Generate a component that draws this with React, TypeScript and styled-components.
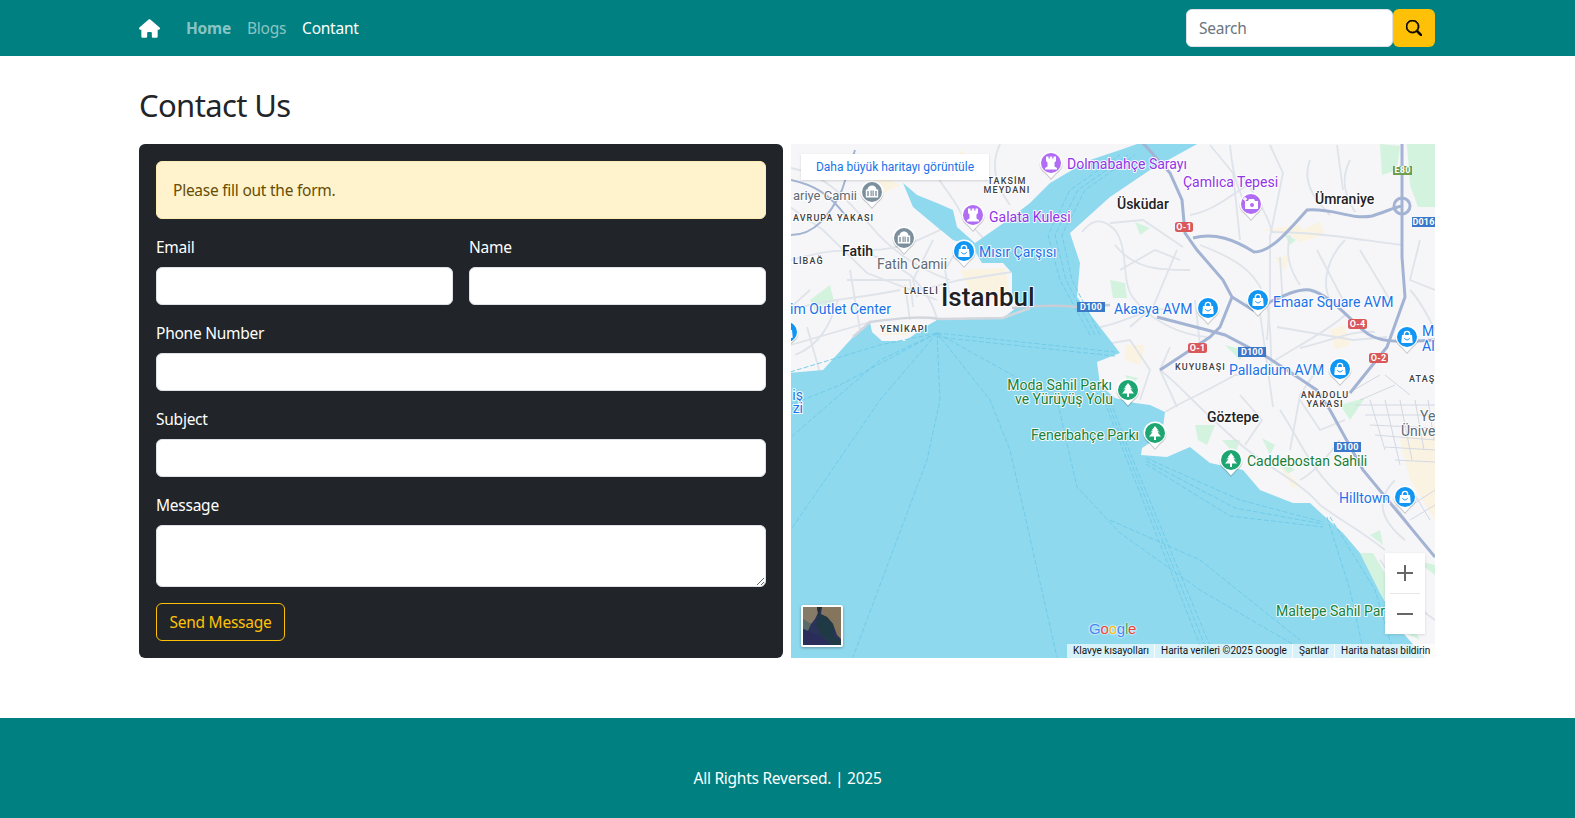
import React from "react";
import styled, { createGlobalStyle } from "styled-components";
import { FaHouse } from "react-icons/fa6";
import { BsSearch } from "react-icons/bs";

const UI_FONT = `"Noto Sans", "Open Sans", sans-serif`;
const TEAL = "#008080";

const Global = createGlobalStyle`
  * { box-sizing: border-box; }
  html, body { margin: 0; padding: 0; background: #fff; }
  body { font-family: ${UI_FONT}; font-size: 15.5px; line-height: 24px; color: #212529; letter-spacing: -0.016em; }
`;

const Page = styled.div`
  width: 1575px;
  height: 818px;
  display: flex;
  flex-direction: column;
  overflow: hidden;
`;
const NavBar = styled.header`
  height: 56px;
  flex: none;
  padding-left: 139px;
  background: ${TEAL};
  display: flex;
`;
const Container = styled.div`
  width: 1296px;
  display: flex;
  align-items: center;
`;
const Brand = styled.a`
  width: 47px;
  height: 56px;
  display: flex;
  align-items: center;
  color: #fff;
  font-size: 21px;
`;
const NavLinks = styled.nav`
  display: flex;
  gap: 16px;
  flex: 1;
`;
const NavLink = styled.a<{ $active?: boolean; $bold?: boolean }>`
  color: ${(p) => (p.$active ? "#fff" : "rgba(255,255,255,.55)")};
  font-weight: ${(p) => (p.$bold ? 700 : 400)};
`;
const SearchForm = styled.form`
  display: flex;
  height: 38px;
`;
const SearchInput = styled.input`
  width: 207px;
  height: 38px;
  padding: 6px 12px;
  border: 1px solid #dee2e6;
  border-radius: 6px;
  background: #fff;
  font: inherit;
  letter-spacing: inherit;
  &::placeholder { color: #6c757d; opacity: 1; }
`;
const SearchButton = styled.button`
  width: 42px;
  height: 38px;
  padding: 0;
  border: 0;
  border-radius: 6px;
  background: #ffc107;
  color: #000;
  display: flex;
  align-items: center;
  justify-content: center;
  font-size: 16px;
  svg { stroke: #000; stroke-width: 0.8px; }
`;
const Main = styled.main`
  width: 1296px;
  margin-left: 139px;
  flex: 1;
`;
const Title = styled.h2`
  margin: 30px 0 19px;
  font-size: 31px;
  line-height: 39px;
  font-weight: 400;
  letter-spacing: -0.02em;
`;
const Columns = styled.div`
  display: grid;
  grid-template-columns: 644px 644px;
  gap: 8px;
`;
const FormCard = styled.form`
  height: 514px;
  padding: 17px;
  border-radius: 6px;
  background: #212529;
  color: #fff;
`;
const Alert = styled.div`
  height: 58px;
  padding: 16px;
  margin-bottom: 16px;
  border: 1px solid #ffecb5;
  border-radius: 6px;
  background: #fff3cd;
  color: #664d03;
`;
const FieldRow = styled.div`
  display: grid;
  grid-template-columns: 1fr 1fr;
  gap: 16px;
`;
const Field = styled.div`
  margin-bottom: 16px;
`;
const Label = styled.label`
  display: block;
  height: 24px;
  margin-bottom: 8px;
`;
const TextInput = styled.input`
  display: block;
  width: 100%;
  height: 38px;
  border: 1px solid #dee2e6;
  border-radius: 6px;
  background: #fff;
`;
const TextArea = styled.textarea`
  display: block;
  width: 100%;
  height: 62px;
  border: 1px solid #dee2e6;
  border-radius: 6px;
  background: #fff;
  resize: vertical;
`;
const SendButton = styled.button`
  height: 38px;
  width: 129px;
  padding: 0;
  border: 1px solid #ffc107;
  border-radius: 6px;
  background: transparent;
  color: #ffc107;
  font: inherit;
  letter-spacing: inherit;
`;
const MapFrame = styled.div`
  position: relative;
  height: 514px;
  overflow: hidden;
  background: #f5f6f7;
`;
const MapSvg = styled.svg`
  display: block;
  width: 644px;
  height: 514px;
`;
const LargerMap = styled.a`
  position: absolute;
  left: 10px;
  top: 10px;
  width: 188px;
  height: 26px;
  background: #fff;
  color: #1a73e8;
  font: 400 12px/26px Roboto, sans-serif;
  letter-spacing: 0;
  text-align: center;
  box-shadow: 0 1px 2px rgba(60,64,67,.2);
`;
const ZoomBox = styled.div`
  position: absolute;
  left: 594px;
  top: 409px;
  width: 40px;
  height: 81px;
  background: #fff;
  box-shadow: 0 1px 3px rgba(0,0,0,.12);
  display: flex;
  flex-direction: column;
`;
const ZoomButton = styled.div`
  height: 40px;
  display: flex;
  align-items: center;
  justify-content: center;
`;
const ZoomDivider = styled.div`
  height: 1px;
  margin: 0 5px;
  background: #e6e6e6;
`;
const Thumb = styled.div`
  position: absolute;
  left: 10px;
  top: 461px;
  width: 42px;
  height: 42px;
  border: 2px solid #fff;
  border-radius: 2px;
  box-shadow: 0 1px 3px rgba(0,0,0,.3);
  overflow: hidden;
  svg { display: block; }
`;
const GoogleMark = styled.div`
  position: absolute;
  left: 298px;
  top: 475px;
  font: 500 15px/20px "Liberation Sans", sans-serif;
  letter-spacing: -0.2px;
  text-shadow: 0 0 2px #fff, 0 0 2px #fff;
`;
const Letter = styled.span<{ $c: string }>`
  color: ${(p) => p.$c};
`;
const Attribution = styled.div`
  position: absolute;
  right: 0;
  bottom: 0;
  height: 14px;
  display: flex;
  background: rgba(255,255,255,.65);
  font: 400 10px/14px Roboto, sans-serif;
  letter-spacing: 0;
  color: #111;
`;
const AttrItem = styled.span<{ $w: number }>`
  width: ${(p) => p.$w}px;
  padding-left: 6px;
  white-space: nowrap;
  & + & { border-left: 1px solid rgba(255,255,255,.8); }
`;
const Footer = styled.footer`
  height: 100px;
  flex: none;
  padding-top: 20px;
  background: ${TEAL};
  color: #fff;
  display: flex;
  align-items: center;
  justify-content: center;
`;

const MapText = styled.text<{ $c: string; $s: number; $w?: number; $ls?: number }>`
  font-family: Roboto, sans-serif;
  font-size: ${(p) => p.$s}px;
  font-weight: ${(p) => p.$w ?? 400};
  letter-spacing: ${(p) => p.$ls ?? 0}px;
  fill: ${(p) => p.$c};
  stroke: rgba(255,255,255,.9);
  stroke-width: 2px;
  stroke-linejoin: round;
  paint-order: stroke;
`;
const BadgeText = styled.text`
  font-family: Roboto, sans-serif;
  font-size: 9px;
  font-weight: 700;
  letter-spacing: 0.2px;
  fill: #fff;
  text-anchor: middle;
`;

const PURPLE = "#9334e6";
const BLUE = "#1a73e8";
const GREEN = "#188038";
const DARK = "#202124";
const GRAY = "#5f6b76";
const AREA = "#3c4043";

type L = [string, number, number, string, number, number?, ("end" | "middle")?, number?];
const labels: L[] = [
  ["Dolmabahçe Sarayı", 1067, 169, PURPLE, 14],
  ["Galata Kulesi", 989, 222, PURPLE, 14],
  ["Çamlıca Tepesi", 1183, 187, PURPLE, 14],
  ["Mısır Çarşısı", 979, 257, BLUE, 14],
  ["im Outlet Center", 891, 314, BLUE, 14, 400, "end"],
  ["Akasya AVM", 1114, 314, BLUE, 14],
  ["Emaar Square AVM", 1273, 307, BLUE, 14],
  ["Palladium AVM", 1229, 375, BLUE, 14],
  ["Hilltown", 1339, 503, BLUE, 14],
  ["M", 1422, 336, BLUE, 14],
  ["Al", 1422, 351, BLUE, 14],
  ["iş", 803, 400, BLUE, 14, 400, "end"],
  ["zi", 803, 413, BLUE, 14, 400, "end"],
  ["ariye Camii", 857, 200, GRAY, 13, 400, "end"],
  ["Fatih Camii", 877, 269, GRAY, 14],
  ["Ye", 1420, 421, GRAY, 14],
  ["Ünive", 1401, 436, GRAY, 14],
  ["Moda Sahil Parkı", 1112, 390, GREEN, 14, 400, "end"],
  ["ve Yürüyüş Yolu", 1113, 404, GREEN, 14, 400, "end"],
  ["Fenerbahçe Parkı", 1139, 440, GREEN, 14, 400, "end"],
  ["Caddebostan Sahili", 1247, 466, GREEN, 14],
  ["Maltepe Sahil Par", 1276, 616, GREEN, 14],
  ["Üsküdar", 1117, 209, DARK, 14, 500],
  ["Ümraniye", 1315, 204, DARK, 14, 500],
  ["Fatih", 842, 256, DARK, 14, 500],
  ["Göztepe", 1207, 422, DARK, 14, 500],
  ["İstanbul", 941, 306, DARK, 26, 500],
  ["AVRUPA YAKASI", 793, 221, AREA, 9, 500, undefined, 1.1],
  ["LİBAĞ", 793, 264, AREA, 9, 500, undefined, 1.1],
  ["LALELİ", 904, 294, AREA, 9, 500, undefined, 1.1],
  ["YENİKAPI", 880, 332, AREA, 9, 500, undefined, 1.1],
  ["TAKSİM", 1007, 184, AREA, 9, 500, "middle", 1.1],
  ["MEYDANI", 1007, 193, AREA, 9, 500, "middle", 1.1],
  ["KUYUBAŞI", 1175, 370, AREA, 9, 500, undefined, 1.1],
  ["ANADOLU", 1325, 398, AREA, 9, 500, "middle", 1.1],
  ["YAKASI", 1325, 407, AREA, 9, 500, "middle", 1.1],
  ["ATAŞ", 1409, 382, AREA, 9, 500, undefined, 1.1],
];

const badges: [string, number, number, number, number, string][] = [
  ["O-1", 1175, 222, 18, 10, "#d9585a"],
  ["O-1", 1188, 343, 19, 10, "#d9585a"],
  ["O-4", 1348, 319, 19, 10, "#d9585a"],
  ["O-2", 1369, 353, 19, 10, "#d9585a"],
  ["E80", 1393, 166, 19, 9, "#6f9f4c"],
  ["D016", 1412, 217, 23, 10, "#3a78c9"],
  ["D100", 1077, 302, 28, 10, "#3a78c9"],
  ["D100", 1238, 347, 28, 10, "#3a78c9"],
  ["D100", 1334, 442, 27, 10, "#3a78c9"],
];

type Kind = "castle" | "museum" | "bag" | "tree" | "camera";
const pinColor: Record<Kind, string> = {
  castle: "#b16cf5",
  museum: "#7b8f9c",
  bag: "#1296f3",
  tree: "#1ea672",
  camera: "#b16cf5",
};
const pins: [Kind, number, number][] = [
  ["castle", 1051, 163],
  ["castle", 973, 215],
  ["museum", 872, 192],
  ["museum", 904, 238],
  ["bag", 964, 251],
  ["bag", 787, 332],
  ["camera", 1251, 204],
  ["bag", 1208, 308],
  ["bag", 1258, 300],
  ["bag", 1407, 337],
  ["bag", 1340, 369],
  ["tree", 1128, 390],
  ["tree", 1155, 433],
  ["tree", 1231, 460],
  ["bag", 1405, 497],
];

const Glyph = ({ kind }: { kind: Kind }) => {
  switch (kind) {
    case "castle":
      return <path fill="#fff" d="M-5-6.500h2.500v2h1.300v-2H1.200v2h1.300v-2H5V-2L3.500-.5V3.500L6 5V6.500H-6V5L-3.500 3.500V-.5L-5-2Z" />;
    case "museum":
      return <path fill="#fff" fillRule="evenodd" d="M0-6.500C3-6.500 4.500-4 4.500-2.500H6.200V5.500H-6.200V-2.500H-4.500C-4.500-4-3-6.500 0-6.500ZM-4.700-1V4H-3.300V-1ZM-1.500-1.500V4H-.3V-1.500ZM.5-1.500V4H1.700V-1.500ZM3.300-1V4H4.700V-1Z" />;
    case "bag":
      return (
        <g>
          <path fill="none" stroke="#fff" strokeWidth="1.400" d="M-2.600-1.500V-3.200C-2.600-6.500 2.600-6.500 2.600-3.200V-1.500" />
          <path fill="#fff" d="M-5-2H5L5.700 5.200C5.700 5.800 5.300 6 4.800 6H-4.800C-5.300 6-5.700 5.800-5.700 5.200Z" />
          <path fill="none" stroke={pinColor.bag} strokeWidth="1" d="M-2.500 1C-2 3.500 2 3.500 2.500 1" />
        </g>
      );
    case "tree":
      return <path fill="#fff" d="M0-7L3.500-2.500H1.800L5-.8H2.500L6 3.500H1V7H-1V3.500H-6L-2.500-.8H-5L-1.800-2.500H-3.500Z" />;
    case "camera":
      return (
        <g>
          <path fill="#fff" d="M-6-3H-3L-2-5H3L4-3H7V5H-6Z" />
          <circle cx="1" cy="1" r="2" fill={pinColor.camera} />
          <path stroke="#fff" strokeWidth="1.300" d="M-6-7V-3M-8-5H-4" />
        </g>
      );
  }
};

const PIN_SHAPE = "M-11.500 0A11.500 11.500 0 0 1 11.500 0C11.500 5.500 7 8 5 10L0 15.500L-5 10C-7 8-11.500 5.500-11.500 0Z";
const Pin = ({ kind, x, y }: { kind: Kind; x: number; y: number }) => (
  <g transform={`translate(${x} ${y})`}>
    <path fill="#000" opacity=".18" transform="translate(0 1.500)" d={PIN_SHAPE} />
    <path fill="#fff" d={PIN_SHAPE} />
    <circle r="10" fill={pinColor[kind]} />
    <Glyph kind={kind} />
  </g>
);

const waterPath =
  "M789,373 L823,370 L853,337 L870,322 L872,332 L882,341 L905,341 L925,327 L937,320 L1003,318 L1020,305 L1012,295 L1012,273 L1003,263 L982,263 L972,246 L953,240 L937,227 L913,207 L903,183 L917,195 L937,203 L953,210 L957,227 L975,243 L1005,222 L1030,203 L1050,183 L1067,173 L1090,160 L1120,150 L1140,143 L1199,143 L1150,170 L1110,197 L1070,233 L1080,263 L1077,297 L1100,327 L1120,353 L1097,362 L1100,385 L1115,398 L1135,403 L1150,405 L1165,412 L1162,435 L1142,448 L1141,455 L1167,457 L1190,447 L1210,463 L1243,470 L1260,490 L1293,503 L1310,503 L1323,515 L1343,533 L1360,553 L1380,593 L1403,633 L1427,660 L789,660 Z";

const highways = [
  "M1142,142 L1170,173 L1182,200 L1185,233 L1197,250 L1223,280 L1232,297 L1220,327 L1210,337 L1160,370",
  "M1193,238 C1215,232 1235,240 1254,252 C1270,252 1285,235 1307,210 C1335,208 1350,220 1372,216 C1385,212 1395,207 1402,206",
  "M1402,142 L1402,257 L1405,297 L1387,347 L1350,393",
  "M1232,297 L1253,310 C1275,300 1295,288 1310,290 C1330,295 1345,315 1363,330 C1375,342 1395,343 1435,340",
  "M1157,317 L1207,330 L1225,335 L1267,357 L1317,390 L1330,410 L1363,470 L1435,557",
  "M1400,340 L1415,338",
];
const minorRoads = [
  "M791,168 C830,175 850,205 870,225 C890,250 920,270 950,280",
  "M791,260 C830,250 860,240 910,275 C930,295 935,310 937,320",
  "M870,250 C900,250 920,240 950,225",
  "M791,310 C820,300 850,300 900,290",
  "M795,355 C820,345 830,325 838,300",
  "M850,270 L860,330",
  "M905,285 L910,320",
  "M925,155 C935,180 950,190 962,215 L985,240",
  "M1000,144 C990,165 995,185 1010,205",
  "M791,345 L870,322",
  "M1012,272 L960,280 L920,290",
  "M1082,232 C1090,222 1100,215 1115,230 C1130,250 1120,285 1135,300 C1150,320 1180,335 1207,337",
  "M1100,327 C1120,325 1150,305 1170,310",
  "M1160,370 C1180,385 1190,400 1230,435 C1260,465 1300,480 1320,505 C1340,520 1360,530 1385,550",
  "M1165,412 C1185,400 1200,395 1235,375 L1290,370 L1320,395",
  "M1242,175 C1255,195 1268,215 1272,232",
  "M1230,145 C1232,165 1235,190 1250,210",
  "M1310,160 C1300,185 1320,205 1330,215",
  "M1350,160 C1340,180 1345,195 1355,212",
  "M1190,215 C1220,210 1240,185 1260,180",
  "M1200,245 C1240,260 1260,275 1267,305 C1272,330 1270,350 1272,375",
  "M1270,232 C1320,232 1360,240 1402,245",
  "M1345,240 C1330,255 1320,280 1330,300",
  "M1290,235 C1285,255 1290,270 1300,285",
  "M1300,348 C1335,340 1350,330 1375,332",
  "M1268,365 C1290,350 1330,330 1345,315",
  "M1320,365 L1300,395 L1290,450",
  "M1280,410 C1300,440 1310,470 1345,500",
  "M1340,440 C1325,460 1310,475 1300,480",
  "M1405,540 C1380,520 1375,500 1395,480",
  "M1380,560 C1400,590 1420,610 1435,620",
  "M1115,245 C1135,270 1160,270 1190,270",
  "M1410,290 C1420,300 1430,320 1435,330",
  "M1210,145 L1233,173 L1240,240",
  "M1270,145 L1283,173 L1270,237 L1270,297 L1267,340",
  "M1337,145 L1343,190",
  "M1110,223 L1143,220 L1183,247",
  "M1177,250 L1153,307 L1130,327",
  "M1280,257 L1283,307",
  "M1317,250 L1343,300",
  "M1277,327 L1353,340 L1387,337",
  "M1260,313 L1273,407",
  "M1170,347 L1160,370 L1177,407",
  "M790,207 L823,230 L867,273 L937,300",
  "M847,280 L910,280 L913,307",
  "M933,240 L913,280 L917,297",
  "M960,245 L945,270 L950,297",
  "M807,327 L820,373",
  "M810,290 L791,307",
  "M1100,345 L1130,340 L1150,370 L1140,400",
  "M1120,270 L1155,250 L1180,260",
  "M1360,250 L1390,300",
  "M1420,240 L1410,280 L1435,290",
  "M1300,400 L1320,430 L1345,420",
  "M1240,395 L1262,420 L1245,445",
  "M1200,345 L1195,300",
];
const denseRoads = [
  "M1355,405 L1435,405 M1365,415 L1435,415 M1370,425 L1435,428 M1375,435 L1435,440 M1385,447 L1435,450 M1395,460 L1435,462",
  "M1370,400 L1385,450 M1385,400 L1400,465 M1400,400 L1412,460 M1415,400 L1424,450 M1428,400 L1434,440",
  "M1404,510 L1435,490 M1410,520 L1435,505 M1395,505 L1410,525 M1415,495 L1430,520",
  "M1345,395 L1380,375 M1360,400 L1395,385 M1385,375 L1410,395",
];
const shipLanes = [
  "M937,333 L880,400 L792,528",
  "M937,333 L940,400 L927,460 L853,657",
  "M937,333 L990,400 L1010,450 L1057,657",
  "M937,333 L1057,400 L1077,487 L1120,533 L1200,590 L1320,660",
  "M937,333 L880,360 L790,438",
  "M937,333 L840,385 L790,405",
  "M937,333 L880,345 L790,372",
  "M937,333 L1115,352",
  "M937,337 L1115,356",
  "M1100,335 L1072,280 L1062,235 L1085,190 L1135,155",
  "M1095,335 L1066,280 L1055,235 L1078,190 L1128,155",
  "M1090,335 L1060,280 L1048,235 L1070,190 L1120,155",
  "M1102,395 L1125,455 L1205,658",
  "M1105,395 L1128,455 L1210,658",
  "M1108,395 L1131,455 L1215,658",
  "M1146,458 L1240,500 L1323,522",
  "M1146,461 L1235,508 L1323,524",
  "M1146,464 L1230,516 L1323,527",
  "M1327,517 L1350,590 L1365,658",
  "M1330,517 L1375,590 L1395,658",
  "M1110,520 L1200,560 L1300,640",
];
const greens = [
  "M1407,144 L1435,144 L1435,207 L1418,207 L1410,185 Z",
  "M1380,144 L1400,146 L1397,170 L1382,175 Z",
  "M1360,553 L1373,553 L1395,590 L1420,640 L1405,633 L1380,593 Z",
  "M1110,280 L1125,283 L1127,298 L1113,298 Z",
  "M1195,425 L1215,425 L1207,445 L1198,440 Z",
  "M830,285 L810,300 L815,310 L835,305 Z",
  "M1222,440 L1240,440 L1235,455 Z",
  "M1262,438 L1275,445 L1270,455 Z",
  "M1275,455 L1295,470 L1285,475 Z",
  "M1105,170 L1130,160 L1135,170 L1115,185 Z",
  "M1225,345 L1245,350 L1240,360 Z",
  "M1135,222 L1150,228 L1140,235 Z",
  "M1283,232 L1296,240 L1290,245 Z",
  "M1340,405 L1365,398 L1350,420 Z",
  "M1125,375 L1138,378 L1130,388 Z",
  "M1370,535 L1380,530 L1383,545 Z",
  "M1415,560 L1435,565 L1435,575 Z",
];
const tans = [
  "M1290,235 L1320,222 L1325,235 L1300,242 Z",
  "M1275,258 L1290,255 L1285,270 Z",
  "M960,270 L1005,268 L1010,295 L975,300 Z",
  "M880,335 L905,335 L920,325 L890,325 Z",
  "M1125,345 L1145,345 L1140,365 L1125,360 Z",
  "M1330,330 L1345,325 L1350,345 L1335,350 Z",
  "M1400,440 L1435,425 L1435,520 L1410,480 Z",
  "M1260,230 L1300,225 L1305,235 Z",
  "M1195,470 L1225,470 L1230,478 Z",
  "M1280,465 L1300,485 L1292,488 Z",
  "M960,150 L975,160 L955,180 Z",
  "M870,170 L900,185 L880,195 Z",
];

const CityMap = () => (
  <MapSvg viewBox="791 144 644 514" aria-hidden>
    <rect x="791" y="144" width="644" height="514" fill="#f6f6f8" />
    {greens.map((d, i) => <path key={i} d={d} fill="#d3f3df" />)}
    {tans.map((d, i) => <path key={i} d={d} fill="#fbf3e2" />)}
    <g fill="none" stroke="#dfe3ea" strokeWidth="1.800">
      {minorRoads.map((d, i) => <path key={i} d={d} />)}
    </g>
    <g fill="none" stroke="#d3d8e3" strokeWidth="1">
      {denseRoads.map((d, i) => <path key={i} d={d} />)}
    </g>
    <path d={waterPath} fill="#8fd9ef" />
    <g fill="none" stroke="#6cc9e8" strokeWidth=".9" strokeDasharray="5 2">
      {shipLanes.map((d, i) => <path key={i} d={d} />)}
    </g>
    <path d="M1012,308 C1040,305 1060,305 1077,307 L1110,305" fill="none" stroke="#c6cdd6" strokeWidth="2.500" />
    <path d="M853,337 L870,322 C900,318 920,316 940,319 L1003,318 L1030,308" fill="none" stroke="#d2d7de" strokeWidth="2.500" />
    <g fill="none" stroke="#a3b3d3" strokeWidth="3">
      {highways.map((d, i) => <path key={i} d={d} />)}
      <path d="M791,235 C815,235 830,215 842,190 L855,150" strokeWidth="2" />
      <path d="M791,180 C815,185 830,195 845,215" strokeWidth="2" />
    </g>
    <circle cx="1402" cy="206" r="8" fill="none" stroke="#a3b3d3" strokeWidth="3" />
    {badges.map(([t, x, y, w, h, c], i) => (
      <g key={i}>
        <rect x={x} y={y} width={w} height={h} rx={c === "#d9585a" ? 2.5 : 0} fill={c} />
        <BadgeText x={x + w / 2} y={y + h - 1.8}>{t}</BadgeText>
      </g>
    ))}
    {labels.map(([t, x, y, c, s, w, a, ls], i) => (
      <MapText key={i} x={x} y={y} $c={c} $s={s} $w={w} $ls={ls} textAnchor={a ?? "start"}>{t}</MapText>
    ))}
    {pins.map(([k, x, y], i) => <Pin key={i} kind={k} x={x} y={y} />)}
  </MapSvg>
);

const SatelliteThumb = () => (
  <svg width="38" height="38" viewBox="0 0 38 38" aria-hidden>
    <rect width="38" height="38" fill="#2a3358" />
    <path d="M0 0H14L15 6L12 12L8 17L3 15L0 12Z" fill="#867a68" />
    <path d="M19 0H38V32L34 28L30 17L24 10L18 7Z" fill="#85755c" />
    <path d="M14 0L19 0L15 7L13 12L15 6Z" fill="#222e33" />
    <path d="M0 12L8 17L5 24L0 22Z" fill="#5b6a68" />
    <path d="M15 7L24 10L30 17L31 30L20 30L13 18Z" fill="#1f3a44" />
    <path d="M0 22L5 24L20 30L28 38H0Z" fill="#2a2d5a" />
    <path d="M31 30L38 34V38H28L20 30Z" fill="#203a48" />
  </svg>
);

export default function App() {
  return (
    <Page>
      <Global />
      <NavBar>
        <Container>
          <Brand><FaHouse /></Brand>
          <NavLinks>
            <NavLink $bold>Home</NavLink>
            <NavLink>Blogs</NavLink>
            <NavLink $active>Contant</NavLink>
          </NavLinks>
          <SearchForm>
            <SearchInput placeholder="Search" />
            <SearchButton type="button"><BsSearch /></SearchButton>
          </SearchForm>
        </Container>
      </NavBar>
      <Main>
        <Title>Contact Us</Title>
        <Columns>
          <FormCard>
            <Alert>Please fill out the form.</Alert>
            <FieldRow>
              <Field><Label>Email</Label><TextInput /></Field>
              <Field><Label>Name</Label><TextInput /></Field>
            </FieldRow>
            <Field><Label>Phone Number</Label><TextInput /></Field>
            <Field><Label>Subject</Label><TextInput /></Field>
            <Field><Label>Message</Label><TextArea /></Field>
            <SendButton type="button">Send Message</SendButton>
          </FormCard>
          <MapFrame>
            <CityMap />
            <LargerMap>Daha büyük haritayı görüntüle</LargerMap>
            <Thumb><SatelliteThumb /></Thumb>
            <GoogleMark>
              <Letter $c="#4285f4">G</Letter><Letter $c="#ea4335">o</Letter><Letter $c="#fbbc05">o</Letter><Letter $c="#4285f4">g</Letter><Letter $c="#34a853">l</Letter><Letter $c="#ea4335">e</Letter>
            </GoogleMark>
            <ZoomBox>
              <ZoomButton>
                <svg width="18" height="18" viewBox="0 0 18 18" aria-hidden><path d="M9 1V17M1 9H17" stroke="#666" strokeWidth="2" /></svg>
              </ZoomButton>
              <ZoomDivider />
              <ZoomButton>
                <svg width="18" height="18" viewBox="0 0 18 18" aria-hidden><path d="M1 9H17" stroke="#666" strokeWidth="2" /></svg>
              </ZoomButton>
            </ZoomBox>
            <Attribution>
              <AttrItem $w={87}>Klavye kısayolları</AttrItem>
              <AttrItem $w={138}>Harita verileri ©2025 Google</AttrItem>
              <AttrItem $w={42}>Şartlar</AttrItem>
              <AttrItem $w={101}>Harita hatası bildirin</AttrItem>
            </Attribution>
          </MapFrame>
        </Columns>
      </Main>
      <Footer>All Rights Reversed. | 2025</Footer>
    </Page>
  );
}
